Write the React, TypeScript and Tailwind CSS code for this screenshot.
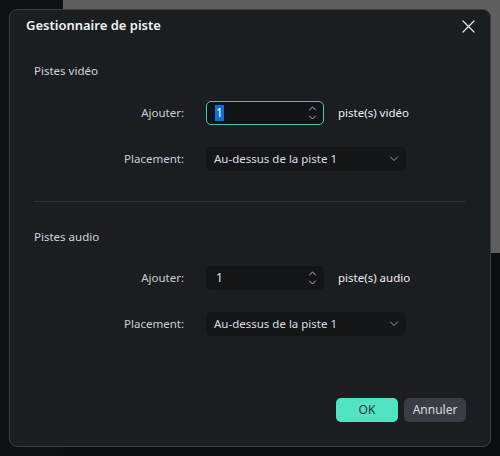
import React from "react";

const font = { fontFamily: '"Noto Sans", "Open Sans", Arial, sans-serif' };

function Spinner() {
  return (
    <svg width="9" height="16" viewBox="0 0 9 16" fill="none" stroke="#b8bdc4" strokeWidth="1" strokeLinecap="round" strokeLinejoin="round">
      <path d="M1.5 5 L4.5 2 L7.5 5" />
      <path d="M1.5 11 L4.5 14 L7.5 11" />
    </svg>
  );
}

function Chevron() {
  return (
    <svg width="10" height="6" viewBox="0 0 10 6" fill="none" stroke="#9aa0a7" strokeWidth="1" strokeLinecap="round" strokeLinejoin="round">
      <path d="M1.5 1 L5 4.5 L8.5 1" />
    </svg>
  );
}

function NumberRow({ focused, unit }: { focused?: boolean; unit: string }) {
  return (
    <div className="flex items-center h-[24px]">
      <div className="w-[150px] text-right text-[11.5px] text-[#c8cdd5]">Ajouter:</div>
      <div
        className={
          focused
            ? "ml-[22px] w-[118px] h-[24px] rounded-[5px] border border-[#46c9a6] bg-[#111316] flex items-center justify-between pl-[8px] pr-[6px]"
            : "ml-[22px] w-[118px] h-[24px] rounded-[5px] border border-[#121417] bg-[#121417] flex items-center justify-between pl-[8px] pr-[6px]"
        }
      >
        {focused ? (
          <span className="bg-[#0b6fd8] text-white text-[12px] leading-[16px] px-[1px]">1</span>
        ) : (
          <span className="text-[#e2e5e9] text-[12px] leading-[16px] px-[1px]">1</span>
        )}
        <Spinner />
      </div>
      <div className="ml-[14px] text-[11.5px] text-[#eef0f2]">{unit}</div>
    </div>
  );
}

function SelectRow() {
  return (
    <div className="flex items-center h-[24px]">
      <div className="w-[150px] text-right text-[11.5px] text-[#c8cdd5]">Placement:</div>
      <div className="ml-[22px] w-[200px] h-[24px] rounded-[5px] bg-[#141619] flex items-center justify-between pl-[8px] pr-[7px]">
        <span className="text-[11.5px] text-[#d9dde2]">Au-dessus de la piste 1</span>
        <Chevron />
      </div>
    </div>
  );
}

export default function App() {
  return (
    <div className="relative w-[500px] h-[456px] overflow-hidden bg-[#0e0f11]" style={font}>
      <div className="flex h-full">
        <div className="w-[63px] h-full bg-[#0f1012]" />
        <div className="flex-1 flex flex-col">
          <div className="h-[253px] bg-[#5f5f5f]" />
          <div className="flex-1 bg-[#0d0e10]" />
        </div>
      </div>

      <div className="absolute left-[9px] top-[9px] w-[482px] h-[438px] rounded-[8px] border border-[#3a3e44] bg-[#1b1e21] flex flex-col">
        <div className="h-[32px] flex items-center justify-between pl-[16px] pr-[15px]">
          <span className="text-[13px] font-semibold text-[#f2f3f5]">Gestionnaire de piste</span>
          <svg width="13" height="13" viewBox="0 0 13 13" stroke="#e6e8eb" strokeWidth="1.2" strokeLinecap="round">
            <path d="M1 1 L12 12 M12 1 L1 12" />
          </svg>
        </div>

        <div className="px-[24px] flex flex-col">
          <div className="mt-[20px] h-[18px] flex items-center text-[11.5px] text-[#d0d5db]">Pistes vidéo</div>
          <div className="mt-[21px]">
            <NumberRow focused unit="piste(s) vidéo" />
          </div>
          <div className="mt-[22px]">
            <SelectRow />
          </div>
          <div className="mt-[30px] h-px bg-[#2b2e33]" />
          <div className="mt-[26px] h-[18px] flex items-center text-[11.5px] text-[#d0d5db]">Pistes audio</div>
          <div className="mt-[20px]">
            <NumberRow unit="piste(s) audio" />
          </div>
          <div className="mt-[22px]">
            <SelectRow />
          </div>
          <div className="mt-[62px] flex justify-end gap-[6px]">
            <button className="w-[62px] h-[24px] rounded-[5px] bg-[#52e3c2] text-[12px] text-[#2c3539]">OK</button>
            <button className="w-[62px] h-[24px] rounded-[5px] bg-[#3a3e44] text-[12px] text-[#d6dae0]">Annuler</button>
          </div>
        </div>
      </div>
    </div>
  );
}
